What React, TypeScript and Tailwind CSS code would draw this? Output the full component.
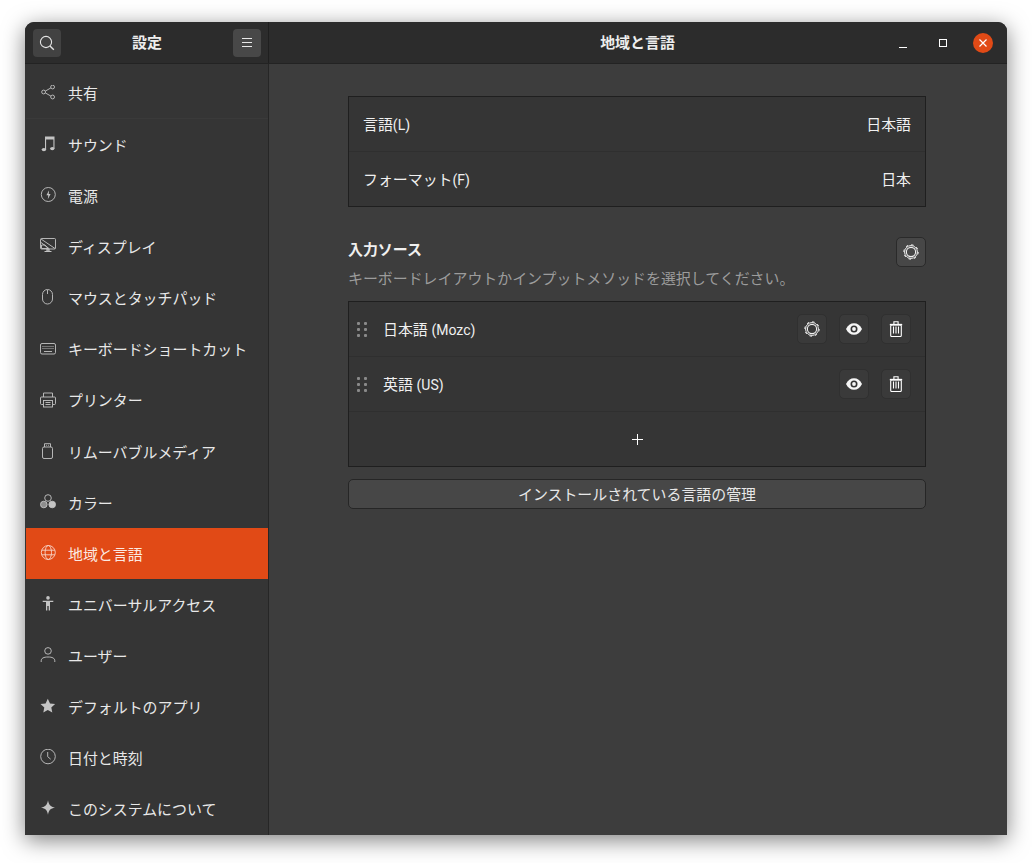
import React from "react";

const jp = 'Roboto, "Noto Sans CJK JP", sans-serif';

type IconProps = { className?: string };

const SearchIcon = () => (
  <svg width="16" height="16" viewBox="0 0 16 16" fill="none" stroke="#e4e4e4" strokeWidth="1.1">
    <circle cx="7" cy="7" r="5.6" />
    <path d="M11 11l3.8 3.8" strokeWidth="1.4" />
  </svg>
);

const MenuIcon = () => (
  <svg width="16" height="16" viewBox="0 0 16 16" fill="none" stroke="#e8e8e8" strokeWidth="1">
    <path d="M3 3.5h10M3 7.5h10M3 11.5h10" />
  </svg>
);

const ic = "w-4 h-4 shrink-0";
const gray = "#c4c4c4";

const ShareIcon = ({ className }: IconProps) => (
  <svg className={className} viewBox="0 0 16 16" fill="none" stroke={gray} strokeWidth="0.9">
    <circle cx="3.6" cy="7" r="1.9" />
    <circle cx="12.6" cy="2" r="1.9" />
    <circle cx="12.6" cy="12" r="1.9" />
    <path d="M5.3 6.1l5.6-3.2M5.3 7.9l5.6 3.2" />
  </svg>
);

const MusicIcon = ({ className }: IconProps) => (
  <svg className={className} viewBox="0 0 16 16" fill={gray} stroke="none">
    <path d="M5 0.5h9.5v12h-1.1V3.5H6.1v10H5z" />
    <ellipse cx="3.9" cy="13.6" rx="2.2" ry="1.7" />
    <ellipse cx="12.3" cy="12.6" rx="2.2" ry="1.7" />
  </svg>
);

const PowerIcon = ({ className }: IconProps) => (
  <svg className={className} viewBox="0 0 16 16" fill="none" stroke={gray} strokeWidth="0.9">
    <circle cx="8.3" cy="7.5" r="7" />
    <path d="M9.1 3.2L6.4 8.2h1.9l-.5 4 2.8-5.2H8.7z" fill={gray} stroke="none" />
  </svg>
);

const DisplayIcon = ({ className }: IconProps) => (
  <svg className={className} viewBox="0 0 16 16" fill="none" stroke={gray} strokeWidth="0.9">
    <rect x="0.5" y="0.5" width="15" height="10.5" rx="1" />
    <path d="M1 1l14 9.5M1 4.5l8 6M1.5 7h3.5l3 3.5H1.5z" />
    <path d="M7 11h2v2H7zM4.5 13.5h7" strokeWidth="1.2" />
  </svg>
);

const MouseIcon = ({ className }: IconProps) => (
  <svg className={className} viewBox="0 0 16 16" fill="none" stroke={gray} strokeWidth="0.9">
    <rect x="2.5" y="0.5" width="10" height="14.5" rx="5" />
    <path d="M7.5 1v4" />
  </svg>
);

const KeyboardIcon = ({ className }: IconProps) => (
  <svg className={className} viewBox="0 0 16 16" fill="none" stroke={gray} strokeWidth="0.9">
    <rect x="0.5" y="2.5" width="15" height="10.5" rx="1.5" />
    <path d="M2.5 5.5h11M2.5 7.5h11" strokeDasharray="1 1" />
    <path d="M4 10.5h8" />
  </svg>
);

const PrinterIcon = ({ className }: IconProps) => (
  <svg className={className} viewBox="0 0 16 16" fill="none" stroke={gray} strokeWidth="0.9">
    <path d="M3.5 5V1h9v4" />
    <path d="M3 12.5H1.5a1 1 0 0 1-1-1V6a1 1 0 0 1 1-1h13a1 1 0 0 1 1 1v5.5a1 1 0 0 1-1 1H13" />
    <rect x="3.5" y="8.5" width="9" height="6.5" />
    <path d="M5.5 10.5h5M5.5 12.5h5" />
  </svg>
);

const UsbIcon = ({ className }: IconProps) => (
  <svg className={className} viewBox="0 0 16 16" fill="none" stroke={gray} strokeWidth="0.9">
    <rect x="2.5" y="4" width="10" height="11.5" rx="1.5" />
    <path d="M4.5 4V0.7h6V4" />
    <path d="M6 2.3h0.8M8.2 2.3h0.8" />
  </svg>
);

const ColorIcon = ({ className }: IconProps) => (
  <svg className={className} viewBox="0 0 16 16" fill="none" stroke={gray} strokeWidth="0.9">
    <circle cx="8" cy="4" r="3.3" />
    <circle cx="3.8" cy="10.5" r="3.3" fill="#8d8d8d" />
    <circle cx="12.2" cy="10.5" r="3.3" fill={gray} />
  </svg>
);

const GlobeIcon = ({ className }: IconProps) => (
  <svg className={className} viewBox="0 0 16 16" fill="none" stroke="#f7d5c8" strokeWidth="0.9">
    <circle cx="8.3" cy="7.5" r="7" />
    <ellipse cx="8.3" cy="7.5" rx="3.2" ry="7" />
    <path d="M1.8 5.2h13M1.8 9.8h13" />
  </svg>
);

const AccessIcon = ({ className }: IconProps) => (
  <svg className={className} viewBox="0 0 16 16" fill={gray} stroke="none">
    <circle cx="8" cy="1.9" r="1.8" />
    <path d="M2.7 4.7h10.6v1.4h-3.3v8.4H8.7V10H7.3v4.5H6V6.1H2.7z" />
  </svg>
);

const UserIcon = ({ className }: IconProps) => (
  <svg className={className} viewBox="0 0 16 16" fill="none" stroke={gray} strokeWidth="0.9">
    <circle cx="8" cy="3.9" r="3.3" />
    <path d="M1.2 15v-1.2C1.2 11.2 3.7 10 8 10s6.8 1.2 6.8 3.8V15" />
  </svg>
);

const StarIcon = ({ className }: IconProps) => (
  <svg className={className} viewBox="0 0 16 16" fill={gray} stroke="none">
    <path d="M7.8 0.7l2.2 4.7 5.1.6-3.8 3.5 1 5.1-4.5-2.6-4.5 2.6 1-5.1L0.5 6l5.1-.6z" />
  </svg>
);

const ClockIcon = ({ className }: IconProps) => (
  <svg className={className} viewBox="0 0 16 16" fill="none" stroke={gray} strokeWidth="0.9">
    <circle cx="8" cy="7.5" r="7.3" />
    <path d="M7.7 3v4.7l3 2.5" />
  </svg>
);

const SparkIcon = ({ className }: IconProps) => (
  <svg className={className} viewBox="0 0 16 16" fill={gray} stroke="none">
    <path d="M8 0.2c.7 4.4 2.4 6.4 7 7.3-4.6.9-6.3 2.9-7 7.3-.7-4.4-2.4-6.4-7-7.3 4.6-.9 6.3-2.9 7-7.3z" />
  </svg>
);

const GearIcon = () => (
  <svg width="16" height="16" viewBox="0 0 16 16" fill="none" stroke="#f0f0f0">
    <circle cx="8" cy="8" r="4.6" strokeWidth="1.1" />
    <circle cx="8" cy="8" r="6.4" strokeWidth="1" />
    <circle cx="8" cy="8" r="7.2" strokeWidth="1" strokeDasharray="2.4 3.25" />
  </svg>
);

const EyeIcon = () => (
  <svg width="16" height="16" viewBox="0 0 16 16">
    <path d="M0 8C1.8 4.2 4.6 2.2 8 2.2s6.2 2 8 5.8c-1.8 3.8-4.6 5.8-8 5.8S1.8 11.8 0 8z" fill="#f6f6f6" />
    <circle cx="8" cy="8" r="3.5" fill="#353535" />
    <circle cx="8" cy="8" r="1.9" fill="#f6f6f6" />
  </svg>
);

const TrashIcon = () => (
  <svg width="16" height="16" viewBox="0 0 16 16" fill="none" stroke="#ffffff" strokeWidth="1.1">
    <path d="M1.8 3.6h12.4" strokeWidth="1.5" />
    <path d="M5.9 3V0.8h4.2V3" />
    <rect x="2.7" y="4" width="10.6" height="11.5" rx="1" />
    <path d="M5.5 5.5v7M8 5.5v7M10.5 5.5v7" />
  </svg>
);

const DragHandle = () => (
  <svg width="10" height="15" viewBox="0 0 10 15" fill="#8a8a8a" className="shrink-0">
    <rect x="0" y="0" width="3" height="3" rx="1" />
    <rect x="7" y="0" width="3" height="3" rx="1" />
    <rect x="0" y="6" width="3" height="3" rx="1" />
    <rect x="7" y="6" width="3" height="3" rx="1" />
    <rect x="0" y="12" width="3" height="3" rx="1" />
    <rect x="7" y="12" width="3" height="3" rx="1" />
  </svg>
);

const items = [
  { label: "共有", Icon: ShareIcon },
  { label: "サウンド", Icon: MusicIcon },
  { label: "電源", Icon: PowerIcon },
  { label: "ディスプレイ", Icon: DisplayIcon },
  { label: "マウスとタッチパッド", Icon: MouseIcon },
  { label: "キーボードショートカット", Icon: KeyboardIcon },
  { label: "プリンター", Icon: PrinterIcon },
  { label: "リムーバブルメディア", Icon: UsbIcon },
  { label: "カラー", Icon: ColorIcon },
  { label: "地域と言語", Icon: GlobeIcon },
  { label: "ユニバーサルアクセス", Icon: AccessIcon },
  { label: "ユーザー", Icon: UserIcon },
  { label: "デフォルトのアプリ", Icon: StarIcon },
  { label: "日付と時刻", Icon: ClockIcon },
  { label: "このシステムについて", Icon: SparkIcon },
];

function SidebarRow({ label, Icon, index }: { label: string; Icon: React.ComponentType<IconProps>; index: number }) {
  const selected = label === "地域と言語";
  return (
    <div
      className={`flex h-[51.1px] items-center gap-[12px] pl-[14px] ${selected ? "bg-[#e14a16] text-[#fbe9e2]" : "text-[#e8e8e8]"} ${index === 0 ? "border-b border-[#3a3a3a]" : ""}`}
    >
      <Icon className={`${ic} mb-[1px]`} />
      <span className="whitespace-nowrap pt-[3px]">{label}</span>
    </div>
  );
}

function IconButton({ children }: { children: React.ReactNode }) {
  return (
    <div className="flex h-[30px] w-[30px] items-center justify-center rounded-[5px] border border-[#303030] bg-[#3a3a3a]">
      {children}
    </div>
  );
}

export default function App() {
  return (
    <div
      className="h-[863px] w-[1032px] overflow-hidden bg-white pl-[25px] pt-[22px] text-[14.93px]"
      style={{ fontFamily: jp }}
    >
      <div className="flex h-[813px] w-[982px] flex-col overflow-hidden rounded-t-[9px] bg-[#3d3d3d] shadow-[0_5px_22px_rgba(0,0,0,0.5)]">
        <header className="flex h-[42px] shrink-0 border-b border-[#232323] bg-[#2c2c2c] text-[#ededed]">
          <div className="flex w-[244px] shrink-0 items-center justify-between border-r border-[#1f1f1f] pl-[8px] pr-[7px]">
            <div className="flex h-[28px] w-[28px] items-center justify-center rounded-[4px] bg-[#424242]">
              <SearchIcon />
            </div>
            <span className="pt-[2px] font-bold">設定</span>
            <div className="flex h-[28px] w-[28px] items-center justify-center rounded-[4px] bg-[#484848]">
              <MenuIcon />
            </div>
          </div>
          <div className="grid flex-1 grid-cols-[1fr_auto_1fr] items-center">
            <span />
            <span className="-ml-px pt-[2px] font-bold">地域と言語</span>
            <div className="flex items-center justify-end pr-[14px]">
              <svg width="8" height="8" viewBox="0 0 8 8" className="mr-[32px] mt-[4px]">
                <path d="M0 6.5h8" stroke="#ffffff" strokeWidth="1" />
              </svg>
              <div className="mr-[26px] h-[8px] w-[8px] border border-[#ffffff]" />
              <div className="flex h-[20px] w-[20px] items-center justify-center rounded-full bg-[#e14a16]">
                <svg width="8" height="8" viewBox="0 0 8 8" fill="none" stroke="#fff" strokeWidth="1.2">
                  <path d="M0.5 0.5l7 7M7.5 0.5l-7 7" />
                </svg>
              </div>
            </div>
          </div>
        </header>

        <div className="flex min-h-0 flex-1">
          <nav className="w-[244px] shrink-0 border-r border-[#262626] bg-[#353535] pl-px pt-[4px]">
            {items.map((item, i) => (
              <SidebarRow key={item.label} label={item.label} Icon={item.Icon} index={i} />
            ))}
          </nav>

          <main className="flex-1 pt-[32px]">
            <div className="ml-[79px] w-[578px] text-[#f0f0f0]">
              <div className="border border-[#1f1f1f] bg-[#353535]">
                <div className="flex h-[55px] items-center justify-between border-b border-[#2f2f2f] px-[14px] pt-[2px]">
                  <span>言語<span className="text-[14px]">(L)</span></span>
                  <span>日本語</span>
                </div>
                <div className="flex h-[54px] items-center justify-between px-[14px] pt-[2px]">
                  <span>フォーマット<span className="text-[14px]">(F)</span></span>
                  <span>日本</span>
                </div>
              </div>

              <div className="mt-[30px] flex items-start justify-between">
                <div className="pt-px">
                  <div className="font-bold leading-[24px]">入力ソース</div>
                  <div className="mt-[5px] leading-[24px] text-[#9c9c9c]">
                    キーボードレイアウトかインプットメソッドを選択してください。
                  </div>
                </div>
                <div className="flex h-[30px] w-[30px] items-center justify-center rounded-[5px] border border-[#2a2a2a] bg-[#474747]">
                  <GearIcon />
                </div>
              </div>

              <div className="mt-[10px] border border-[#1f1f1f] bg-[#353535]">
                <div className="flex h-[55px] items-center border-b border-[#2f2f2f] pl-[8px] pr-[14px]">
                  <DragHandle />
                  <span className="ml-[16px] flex-1 pt-[2px]">日本語 <span className="text-[14px]">(Mozc)</span></span>
                  <div className="flex gap-[12px]">
                    <IconButton><GearIcon /></IconButton>
                    <IconButton><EyeIcon /></IconButton>
                    <IconButton><TrashIcon /></IconButton>
                  </div>
                </div>
                <div className="flex h-[55px] items-center border-b border-[#2f2f2f] pl-[8px] pr-[14px]">
                  <DragHandle />
                  <span className="ml-[16px] flex-1 pt-[2px]">英語 <span className="text-[14px]">(US)</span></span>
                  <div className="flex gap-[12px]">
                    <IconButton><EyeIcon /></IconButton>
                    <IconButton><TrashIcon /></IconButton>
                  </div>
                </div>
                <div className="flex h-[54px] items-center justify-center">
                  <svg width="12" height="12" viewBox="0 0 12 12" stroke="#ffffff" strokeWidth="1">
                    <path d="M6.5 1v11M1 6.5h11" />
                  </svg>
                </div>
              </div>

              <div className="mt-[12px] flex h-[30px] items-center justify-center rounded-[5px] border border-[#262626] bg-[#474747] pt-[2px] text-[#e8e8e8]">
                インストールされている言語の管理
              </div>
            </div>
          </main>
        </div>
      </div>
    </div>
  );
}
